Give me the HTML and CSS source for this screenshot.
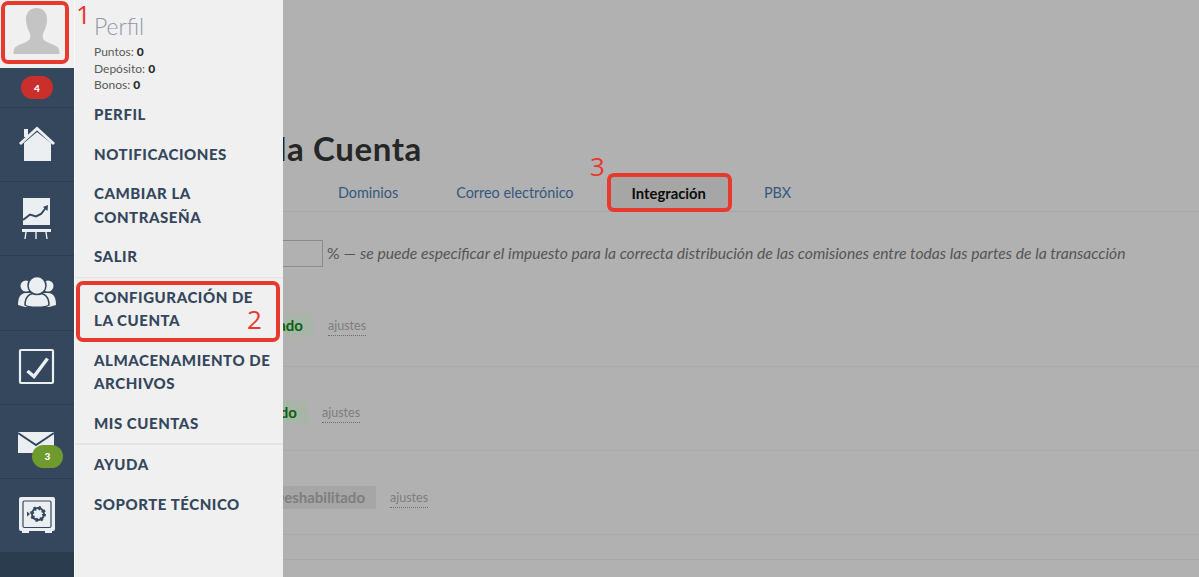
FILE: index.html
```html
<!DOCTYPE html>
<html lang="es">
<head>
<meta charset="utf-8">
<title>Configuración de la Cuenta</title>
<link rel="stylesheet" href="styles.css">
</head>
<body>
<div class="app">
  <nav class="rail">
    <div class="avatar">
      <svg width="74" height="68" viewBox="0 0 74 68"><path class="sil" d="M36.500 8c-7 0-10.500 5-10.500 11 0 5 1.500 10 3.500 13.500 1 2 1 4 .5 6-1 2.500-6 4.500-11 6.500-4.500 1.700-5.500 4-5.500 9h46c0-5-1-7.300-5.500-9-5-2-10-4-11-6.500-.5-2-.5-4 .5-6C45.500 29 47 24 47 19c0-6-3.500-11-10.500-11z"/></svg>
    </div>
    <div class="rail-note"><span class="pill pill-red">4</span></div>
    <a class="rail-item">
      <svg width="74" height="74" viewBox="0 0 74 74"><rect class="ic" x="24" y="22" width="4" height="8"/><path class="ic" d="M24 36 37 25 51 36V54H24z"/><path class="ln" d="M20 37 37 21.500 54 37"/></svg>
    </a>
    <a class="rail-item">
      <svg width="74" height="74" viewBox="0 0 74 74"><rect class="ic" x="23" y="17" width="27" height="30"/><path class="dk" d="M23 39 30 33.500 36 35.500 41 33 46.500 26"/><path class="dkf" d="M43 26 48 24 47.500 30z"/><path class="dkf" d="M23 44H50V47H23z"/><rect class="ic" x="22" y="48" width="29" height="3"/><path class="leg" d="M26 51 25 58M36 51V58M46 51 47 58"/></svg>
    </a>
    <a class="rail-item">
      <svg width="74" height="74" viewBox="0 0 74 74"><circle class="ic" cx="26" cy="31" r="5.500"/><circle class="ic" cx="48" cy="31" r="5.500"/><path class="ic" d="M18 50c0-7 2-12 8-12h22c6 0 8 5 8 12l-7 2H25z"/><path class="ico" d="M25 50c0-8 4-12 12-12s12 4 12 12c-3 3-21 3-24 0z"/><circle class="ico" cx="37" cy="30.500" r="9"/></svg>
    </a>
    <a class="rail-item">
      <svg width="74" height="74" viewBox="0 0 74 74"><rect class="box" x="20" y="20" width="33" height="33" rx="1"/><path class="chk" d="M27.500 41 34 46.500 47.500 28.500"/></svg>
    </a>
    <a class="rail-item">
      <svg width="74" height="74" viewBox="0 0 74 74"><path class="ic" d="M18 28H54V49H18z"/><path class="dk" d="M18 29 36 41 54 29"/></svg>
      <span class="pill pill-green">3</span>
    </a>
    <a class="rail-item">
      <svg width="74" height="74" viewBox="0 0 74 74"><rect class="ic" x="19" y="19" width="36" height="34" rx="2"/><path class="ic" d="M22 52H29V55H22zM45 52H52V55H45z"/><rect class="sb" x="23" y="23" width="28" height="26.500" rx="1.500"/><circle class="gear" cx="38" cy="36" r="6"/><circle class="geard" cx="38" cy="36" r="6"/><path class="dkf" d="M27 33.500 30 36 27 38.500z"/></svg>
    </a>
    <div class="rail-foot"></div>
  </nav>

  <aside class="menu">
    <div class="menu-head">
      <h2 class="menu-title">Perfil</h2>
      <p class="stat">Puntos: <b>0</b></p>
      <p class="stat">Depósito: <b>0</b></p>
      <p class="stat">Bonos: <b>0</b></p>
    </div>
    <ul class="menu-list">
      <li>PERFIL</li>
      <li>NOTIFICACIONES</li>
      <li>CAMBIAR LA CONTRASEÑA</li>
      <li>SALIR</li>
    </ul>
    <ul class="menu-list menu-sep">
      <li>CONFIGURACIÓN DE LA CUENTA</li>
      <li>ALMACENAMIENTO DE ARCHIVOS</li>
      <li>MIS CUENTAS</li>
    </ul>
    <ul class="menu-list menu-sep menu-sep-wide">
      <li>AYUDA</li>
      <li>SOPORTE TÉCNICO</li>
    </ul>
  </aside>

  <main class="main">
    <h1 class="title">Configuración de la Cuenta</h1>
    <div class="tabs">
      <a class="tab">Dominios</a>
      <a class="tab">Correo electrónico</a>
      <a class="tab tab-on">Integración</a>
      <a class="tab">PBX</a>
    </div>
    <div class="tax">
      <span class="tax-input"></span>
      <span class="tax-text">% — <em>se puede especificar el impuesto para la correcta distribución de las comisiones entre todas las partes de la transacción</em></span>
    </div>
    <div class="row row-a"><span class="tag tag-on">Habilitado</span><a class="set">ajustes</a></div>
    <div class="row row-b"><span class="tag tag-on">Habilitado</span><a class="set">ajustes</a></div>
    <div class="row row-c"><span class="tag tag-off">Deshabilitado</span><a class="set">ajustes</a></div>
    <div class="row row-d"></div>
  </main>

  <div class="mark mark-1"></div>
  <div class="mark mark-2"></div>
  <div class="mark mark-3"></div>
  <span class="num num-1">1</span>
  <span class="num num-2">2</span>
  <span class="num num-3">3</span>
</div>
</body>
</html>
```
FILE: styles.css
```css
* { box-sizing: border-box; }
html, body { margin: 0; padding: 0; }
body { font-family: Lato, "Open Sans", sans-serif; background: #b1b1b1; }
.app { position: relative; display: flex; width: 1199px; height: 577px; overflow: hidden; background: #b1b1b1; }

.rail { flex: 0 0 74px; display: flex; flex-direction: column; background: #34475d; }
.avatar { flex: none; height: 68px; background: #f0f0f0; }
.avatar svg { display: block; }
.sil { fill: #c4c4c4; }
.rail-note { flex: none; height: 40px; padding-top: 8px; display: flex; justify-content: center; border-bottom: 1px solid #2d3e52; }
.pill { display: flex; align-items: center; justify-content: center; height: 23px; border-radius: 12px; color: #fff; font-size: 10px; font-weight: 900; }
.pill-red { width: 32px; background: #cb2f2b; }
.pill-green { position: absolute; left: 32px; top: 40px; width: 31px; background: #6f9a2e; }
.rail-item { position: relative; display: block; flex: none; height: 74.2px; border-bottom: 1px solid #2d3e52; }
.rail-item svg { display: block; margin-top: -1px; }
.rail-foot { flex: 1; background: #2c3c4f; }
.ic { fill: #ebeff1; }
.ico { fill: #ebeff1; stroke: #34475d; stroke-width: 1.5; }
.ln { fill: none; stroke: #ebeff1; stroke-width: 3; }
.dk { fill: none; stroke: #34475d; stroke-width: 2; }
.dkf { fill: #34475d; }
.leg { fill: none; stroke: #ebeff1; stroke-width: 1.4; }
.box { fill: none; stroke: #ebeff1; stroke-width: 2.2; }
.chk { fill: none; stroke: #ebeff1; stroke-width: 3.4; }
.sb { fill: none; stroke: #34475d; stroke-width: 1.2; }
.gear { fill: none; stroke: #34475d; stroke-width: 2; }
.geard { fill: none; stroke: #34475d; stroke-width: 4; stroke-dasharray: 2 2.7; }

.menu { flex: 0 0 209px; padding-top: 12px; background: #f0f0f0; border-left: 1px solid #fafafa; }
.menu-head { padding-left: 19px; height: 83px; }
.menu-title { margin: 0 0 4px; font-size: 23px; line-height: 28px; font-weight: 300; color: #8f98a6; }
.stat { margin: 0; font-size: 12px; line-height: 16.500px; color: #5a5a5a; }
.stat b { color: #2a2a2a; font-weight: 900; }
.menu-list { list-style: none; margin: 0; padding: 0; }
.menu-list li { padding: 8px 10px 8px 19px; font-size: 15px; letter-spacing: .55px; line-height: 23.500px; font-weight: 900; color: #34475d; }
.menu-sep { border-top: 1px solid #e4e4e4; }
.menu-sep-wide { border-top-width: 2px; }

.main { flex: 1; min-width: 0; overflow: hidden; color: #222; }
.title { margin: 0 0 0 -273px; padding-top: 128px; height: 174px; font-size: 33px; letter-spacing: .6px; line-height: 40px; font-weight: 700; color: #262626; white-space: nowrap; }
.tabs { display: flex; gap: 10px; height: 38px; padding-left: 31px; border-bottom: 1px solid #a8a8a8; }
.tab { padding: 0 24px; line-height: 38px; height: 37px; font-size: 14.400px; color: #34587e; white-space: nowrap; }
.tab-on { background: #a6a6a6; color: #0b0b0b; font-weight: 700; font-size: 14.800px; }
.tax { display: flex; align-items: center; height: 85px; padding-bottom: 3px; font-size: 15.680px; color: #555; white-space: nowrap; }
.tax-input { width: 41px; height: 27px; margin-left: -1px; border: 1px solid #8b8b8b; margin-right: 4px; }
.tax-text em { font-style: italic; }
.row { display: flex; align-items: flex-start; border-bottom: 1px solid #a9a9a9; }
.row-a { height: 70px; padding-top: 17px; }
.row-b { height: 84px; padding-top: 34px; }
.row-c { height: 84px; padding-top: 35px; }
.row-d { height: 25px; }
.tag { flex: none; height: 23px; padding-right: 11px; text-align: right; line-height: 23px; font-size: 15px; font-weight: 700; white-space: nowrap; }
.tag-on { width: 120px; background: #a8b5a8; color: #0a630a; }
.tag-off { width: 140px; background: #a6a6a6; color: #7e7e7e; }
.row-a .tag { margin-left: -89px; }
.row-b .tag { margin-left: -95px; }
.row-c .tag { margin-left: -47px; }
.set { margin: 3px 0 0 14px; height: 19px; line-height: 18px; font-size: 12.500px; color: #7d7d7d; border-bottom: 1px dotted #6d6d6d; }

.mark { position: absolute; border: 4px solid #e8392f; border-radius: 7px; }
.mark-1 { left: 1px; top: 1px; width: 68px; height: 63px; }
.mark-2 { left: 76px; top: 281px; width: 204px; height: 61px; }
.mark-3 { left: 607px; top: 173px; width: 125px; height: 39px; }
.num { position: absolute; font-family: "Open Sans", sans-serif; font-weight: 400; font-size: 26px; line-height: 30px; color: #e8392f; }
.num-1 { left: 76px; top: -1px; }
.num-2 { left: 247px; top: 304px; }
.num-3 { left: 590px; top: 151px; }
```
